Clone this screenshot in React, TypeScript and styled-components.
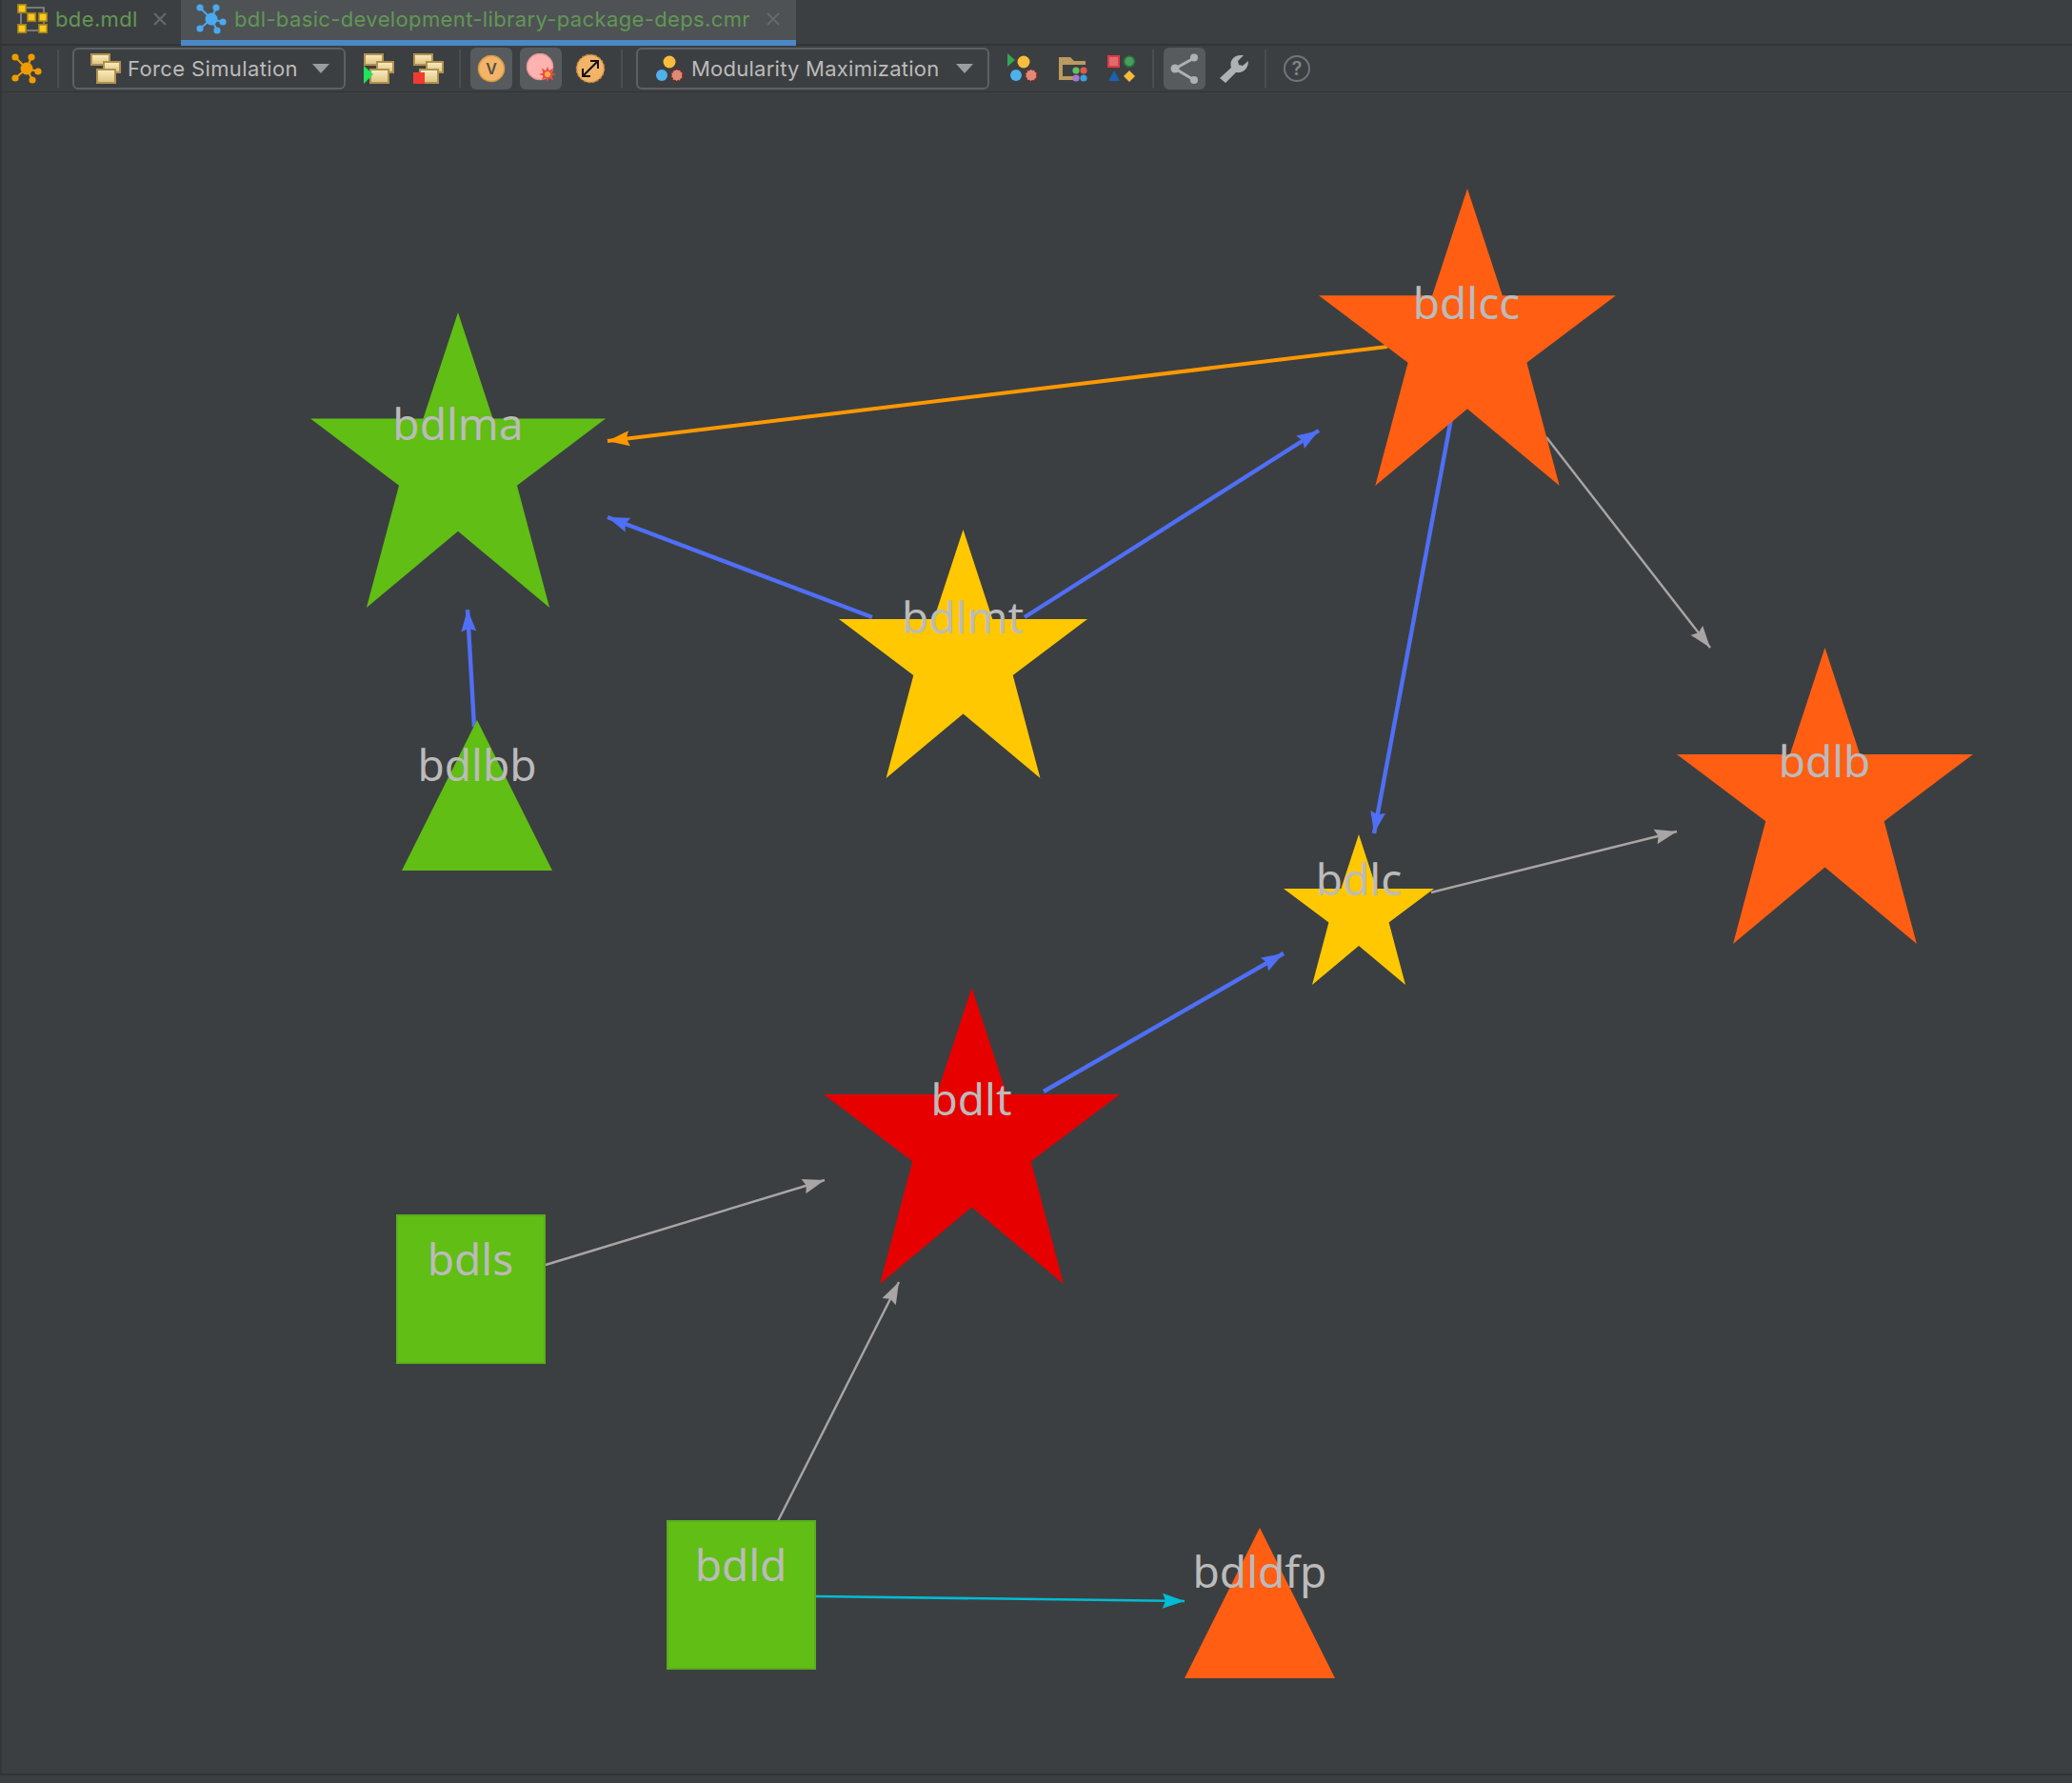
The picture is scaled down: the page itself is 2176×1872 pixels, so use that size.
import { FC } from 'react'
import styled, { createGlobalStyle } from 'styled-components'

const GlobalStyle = createGlobalStyle`
	html, body {
		margin: 0;
		padding: 0;
		background: #3c3f41;
	}
`

const UI_FONT = `Inter, 'Liberation Sans', sans-serif`

const Page = styled.div`
	width: 2176px;
	height: 1872px;
	display: flex;
	flex-direction: column;
	background: #3c3f41;
	font-family: ${UI_FONT};
	overflow: hidden;
`

const TabBar = styled.div`
	height: 48px;
	flex: none;
	display: flex;
	box-sizing: border-box;
	border-left: 2px solid #333536;
	border-bottom: 2px solid #323334;
`

const Tab = styled.div<{ $active?: boolean; $width: number; $pad: number }>`
	width: ${p => p.$width}px;
	height: 48px;
	flex: none;
	display: flex;
	align-items: flex-start;
	box-sizing: border-box;
	padding: 4px 0 0 ${p => p.$pad}px;
	background: ${p => (p.$active ? '#4e5254' : 'transparent')};
	border-bottom: ${p => (p.$active ? '6px solid #4a88c7' : '0')};
`

const TabTitle = styled.span`
	margin: 1px 0 0 8px;
	height: 30px;
	line-height: 30px;
	font-size: 22px;
	letter-spacing: 0.37px;
	color: #629755;
	white-space: nowrap;
	flex: 1;
`

const TabClose = styled.svg<{ $right: number }>`
	width: 14px;
	height: 14px;
	margin: 9px ${p => p.$right}px 0 0;
	flex: none;
	stroke: #67696b;
	stroke-width: 2;
`

const Toolbar = styled.div`
	height: 49px;
	flex: none;
	display: flex;
	align-items: flex-start;
	box-sizing: border-box;
	padding: 2px 0 0 4px;
	border-left: 2px solid #333536;
	border-bottom: 1px solid #323334;
`

const Group = styled.div`
	display: flex;
	gap: 8px;
	flex: none;
`

const Slot = styled.div<{ $on?: boolean }>`
	width: 44px;
	height: 44px;
	flex: none;
	display: flex;
	align-items: center;
	justify-content: center;
	border-radius: 6px;
	background: ${p => (p.$on ? '#575b5e' : 'transparent')};
`

const Separator = styled.div`
	width: 2px;
	height: 40px;
	margin: 2px 10px 0 10px;
	flex: none;
	background: #4b4e50;
`

const Combo = styled.div<{ $width: number }>`
	width: ${p => p.$width}px;
	height: 44px;
	flex: none;
	margin: 0 13px 0 4px;
	display: flex;
	align-items: center;
	box-sizing: border-box;
	padding: 0 15px 0 17px;
	border: 2px solid #5e6163;
	border-radius: 6px;
	gap: 7px;
`

const ComboText = styled.span<{ $spacing: number }>`
	flex: 1;
	font-size: 22px;
	letter-spacing: ${p => p.$spacing}px;
	color: #bbbbbb;
	white-space: nowrap;
`

const ComboArrow = styled.i`
	width: 0;
	height: 0;
	flex: none;
	border-left: 9px solid transparent;
	border-right: 9px solid transparent;
	border-top: 10px solid #9a9c9e;
`

const Canvas = styled.div`
	height: 1767px;
	flex: none;
	box-sizing: border-box;
	border-left: 2px solid #333536;
	border-bottom: 2px solid #323334;
`

const Graph = styled.svg`
	display: block;
	width: 2174px;
	height: 1765px;
`

const NodeLabel = styled.text`
	font-family: 'Noto Sans', 'Open Sans', sans-serif;
	font-size: 46px;
	fill: #bbbbbb;
	text-anchor: middle;
`

const IconLetter = styled.text<{ $size: number; $color: string }>`
	font-family: ${UI_FONT};
	font-size: ${p => p.$size}px;
	font-weight: 600;
	fill: ${p => p.$color};
	text-anchor: middle;
`

const Icon = styled.svg`
	width: 32px;
	height: 32px;
	flex: none;
	display: block;
`

const CloseX: FC<{ right: number }> = ({ right }) => (
	<TabClose viewBox="0 0 14 14" $right={right}>
		<path d="M1 1 L13 13 M13 1 L1 13" />
	</TabClose>
)

const forceDots = [
	[4, 4],
	[21, 4],
	[28, 19],
	[22, 28],
	[4, 26],
]

const ForceShape: FC<{ color: string }> = ({ color }) => (
	<g fill={color} stroke={color}>
		{forceDots.map(([x, y]) => (
			<g key={x + y}>
				<line x1={16} y1={16} x2={x} y2={y} strokeWidth={2} />
				<circle cx={x} cy={y} r={3.6} stroke="none" />
			</g>
		))}
		<circle cx={16} cy={16} r={6.5} stroke="none" />
	</g>
)

const ModelIcon: FC = () => (
	<Icon viewBox="0 0 32 32">
		<path d="M4 4 H28 V28 H4 Z" fill="none" stroke="#8c8e90" strokeWidth={1.6} />
		{[
			[0, 0],
			[10, 9],
			[22, 9],
			[0, 21],
			[22, 21],
		].map(([x, y]) => (
			<rect key={`${x}-${y}`} x={x + 0.8} y={y + 0.8} width={8.5} height={8.5} fill="#f7c81e" stroke="#9c7c18" strokeWidth={1.6} />
		))}
	</Icon>
)

const Stack: FC = () => (
	<>
		<defs>
			<linearGradient id="stackFill" x1="0" y1="0" x2="0" y2="1">
				<stop offset="0" stopColor="#fbeec4" />
				<stop offset="1" stopColor="#dcc27c" />
			</linearGradient>
		</defs>
		{[
			[1, 1, 19, 11],
			[14, 9, 17, 11],
			[7, 17, 19, 14],
		].map(([x, y, w, h]) => (
			<rect key={x} x={x} y={y} width={w} height={h} fill="url(#stackFill)" stroke="#b09050" strokeWidth={2} />
		))}
	</>
)

const ClusterDots: FC<{ x?: number }> = ({ x = 0 }) => (
	<>
		<circle cx={15 + x} cy={9} r={6.5} fill="#f8bd3c" />
		<circle cx={7 + x} cy={23} r={6} fill="#4fb0ec" />
		<circle cx={23 + x} cy={23} r={6} fill="#dd8b76" stroke="#8f2420" strokeWidth={1.6} strokeDasharray="2 1.5" />
	</>
)

const burst =
	'23,14 24.8,18.2 29,15.6 27.6,20.4 32,22 27.6,23.6 29,28.4 24.8,25.8 23,30 21.2,25.8 17,28.4 18.4,23.6 14,22 18.4,20.4 17,15.6 21.2,18.2'

type Shape = 'star' | 'triangle' | 'square'

interface GraphNode {
	id: string
	shape: Shape
	x: number
	y: number
	size: number
	color: string
	labelX: number
	labelY: number
}

const GREEN = '#60be15'
const ORANGE = '#ff5e13'
const YELLOW = '#ffc800'
const RED = '#e60000'
const BLUE = '#4f6ff6'
const GREY = '#aaa5a5'

const nodes: GraphNode[] = [
	{ id: 'bdlcc', shape: 'star', x: 1385, y: 198, size: 312, color: ORANGE, labelX: 1540, labelY: 335 },
	{ id: 'bdlma', shape: 'star', x: 326, y: 328, size: 310, color: GREEN, labelX: 481, labelY: 462 },
	{ id: 'bdlmt', shape: 'star', x: 881, y: 556, size: 261, color: YELLOW, labelX: 1011, labelY: 665 },
	{ id: 'bdlb', shape: 'star', x: 1761, y: 680, size: 311, color: ORANGE, labelX: 1916, labelY: 816 },
	{ id: 'bdlc', shape: 'star', x: 1348, y: 876, size: 158, color: YELLOW, labelX: 1427, labelY: 940 },
	{ id: 'bdlt', shape: 'star', x: 865, y: 1037, size: 311, color: RED, labelX: 1020, labelY: 1171 },
	{ id: 'bdlbb', shape: 'triangle', x: 422, y: 756, size: 158, color: GREEN, labelX: 501, labelY: 820 },
	{ id: 'bdldfp', shape: 'triangle', x: 1244, y: 1604, size: 158, color: ORANGE, labelX: 1323, labelY: 1667 },
	{ id: 'bdls', shape: 'square', x: 417, y: 1276, size: 155, color: GREEN, labelX: 494, labelY: 1339 },
	{ id: 'bdld', shape: 'square', x: 701, y: 1597, size: 155, color: GREEN, labelX: 778, labelY: 1660 },
]

const edges = [
	{ from: [1457, 364], to: [638, 463], color: '#ff9800', width: 4 },
	{ from: [916, 648], to: [638, 543], color: BLUE, width: 4.4 },
	{ from: [1076, 648], to: [1385, 452], color: BLUE, width: 4.4 },
	{ from: [498, 763], to: [491, 640], color: BLUE, width: 4.4 },
	{ from: [1525, 434], to: [1443, 875], color: BLUE, width: 4.4 },
	{ from: [1096, 1146], to: [1348, 1001], color: BLUE, width: 4.4 },
	{ from: [1624, 459], to: [1796, 680], color: GREY, width: 2.4 },
	{ from: [1503, 937], to: [1761, 873], color: GREY, width: 2.4 },
	{ from: [573, 1328], to: [866, 1239], color: GREY, width: 2.4 },
	{ from: [817, 1597], to: [944, 1346], color: GREY, width: 2.4 },
	{ from: [857, 1676], to: [1244, 1681], color: '#00bcd4', width: 2.6 },
]

const starShape = [
	[0.5, 0],
	[0.618, 0.36],
	[1, 0.36],
	[0.7, 0.586],
	[0.81, 1],
	[0.5, 0.741],
	[0.19, 1],
	[0.3, 0.586],
	[0, 0.36],
	[0.382, 0.36],
]

const triangleShape = [
	[0.5, 0],
	[1, 1],
	[0, 1],
]

const squareShape = [
	[0, 0],
	[1, 0],
	[1, 1],
	[0, 1],
]

const shapes: Record<Shape, number[][]> = { star: starShape, triangle: triangleShape, square: squareShape }

const nodePoints = ({ shape, x, y, size }: GraphNode) =>
	shapes[shape].map(([px, py]) => `${x + px * size},${y + py * size}`).join(' ')

// arrow head is drawn by hand so that the tip lands exactly on the edge end
const headPoints = (from: number[], to: number[]) => {
	const len = Math.hypot(to[0] - from[0], to[1] - from[1])
	const ux = (to[0] - from[0]) / len
	const uy = (to[1] - from[1]) / len
	const at = (back: number, side: number) => `${to[0] - ux * back - uy * side},${to[1] - uy * back + ux * side}`
	return [at(0, 0), at(23, 8), at(20, 0), at(23, -8)].join(' ')
}

const App: FC = () => (
	<Page>
		<GlobalStyle />
		<TabBar>
			<Tab $width={188} $pad={16}>
				<ModelIcon />
				<TabTitle>bde.mdl</TabTitle>
				<CloseX right={15} />
			</Tab>
			<Tab $active $width={646} $pad={16}>
				<Icon viewBox="0 0 32 32">
					<ForceShape color="#4aa8f0" />
				</Icon>
				<TabTitle>bdl-basic-development-library-package-deps.cmr</TabTitle>
				<CloseX right={17} />
			</Tab>
		</TabBar>

		<Toolbar>
			<Slot>
				<Icon viewBox="0 0 32 32">
					<ForceShape color="#f09c00" />
				</Icon>
			</Slot>
			<Separator />
			<Combo $width={287}>
				<Icon viewBox="0 0 32 32">
					<Stack />
				</Icon>
				<ComboText $spacing={0.37}>Force Simulation</ComboText>
				<ComboArrow />
			</Combo>
			<Group>
				<Slot>
					<Icon viewBox="0 0 32 32">
						<Stack />
						<polygon points="0,13 10,22 0,32" fill="#1de45a" />
					</Icon>
				</Slot>
				<Slot>
					<Icon viewBox="0 0 32 32">
						<Stack />
						<rect x="0" y="20" width="12" height="12" fill="#f23a30" />
					</Icon>
				</Slot>
			</Group>
			<Separator />
			<Group>
				<Slot $on>
					<Icon viewBox="0 0 32 32">
						<circle cx="16" cy="16" r="13.5" fill="#f2b469" stroke="#d99a45" strokeWidth={1.5} />
						<IconLetter x="16" y="22" $size={16} $color="#54504a">
							V
						</IconLetter>
					</Icon>
				</Slot>
				<Slot $on>
					<Icon viewBox="0 0 32 32">
						<circle cx="15" cy="14" r="13.5" fill="#ffb3b0" stroke="#e89a94" strokeWidth={1.5} />
						<polygon points={burst} fill="#ee4b3e" />
						<circle cx="23" cy="22" r="3" fill="#f6b04a" />
					</Icon>
				</Slot>
				<Slot>
					<Icon viewBox="0 0 32 32">
						<circle cx="16" cy="16" r="14.5" fill="#f2b469" stroke="#c98a3c" strokeWidth={1.5} strokeDasharray="3 1.5" />
						<path d="M9 23 L23 9 M16 8 H24 V16 M8 16 V24 H16" fill="none" stroke="#111" strokeWidth={2} />
					</Icon>
				</Slot>
			</Group>
			<Separator />
			<Combo $width={371}>
				<Icon viewBox="0 0 32 32">
					<ClusterDots x={1} />
				</Icon>
				<ComboText $spacing={0.25}>Modularity Maximization</ComboText>
				<ComboArrow />
			</Combo>
			<Group>
				<Slot>
					<Icon viewBox="0 0 32 32">
						<ClusterDots x={2} />
						<polygon points="0,0 8,7 0,14" fill="#2fa84f" />
					</Icon>
				</Slot>
				<Slot>
					<Icon viewBox="0 0 32 32">
						<path d="M2 4 H14 L18 8 H30 V12 H6 V24 H18 V28 H2 Z" fill="#b99a60" />
						<circle cx="20" cy="18" r="3.6" fill="#62c162" />
						<circle cx="28" cy="18" r="3.6" fill="#e0594f" />
						<circle cx="20" cy="26" r="3.6" fill="#a878c8" />
						<circle cx="28" cy="26" r="3.6" fill="#3ba0dc" />
					</Icon>
				</Slot>
				<Slot>
					<Icon viewBox="0 0 32 32">
						<rect x="2" y="3" width="11" height="11" fill="#e06a70" stroke="#e03a40" strokeWidth={2} />
						<circle cx="24" cy="8.5" r="5.5" fill="#4f9a5c" stroke="#1e7a38" strokeWidth={1.6} />
						<polygon points="8,18 14,29 2,29" fill="#1d5fb0" />
						<polygon points="24,18 30,24 24,30 18,24" fill="#f5b93c" />
					</Icon>
				</Slot>
			</Group>
			<Separator />
			<Group>
				<Slot $on>
					<Icon viewBox="0 0 32 32">
						<path d="M26 5 L6 16 L26 28" fill="none" stroke="#afb1b3" strokeWidth={3} />
						<circle cx="6" cy="16" r="4.5" fill="#afb1b3" />
						<circle cx="26" cy="4.5" r="4" fill="#afb1b3" />
						<circle cx="26" cy="28" r="4" fill="#afb1b3" />
					</Icon>
				</Slot>
				<Slot>
					<Icon viewBox="0 0 32 32">
						<path
							d="M1 26 L13 15 C11 9 14 3 22 2 L26 2 L20 8 L21 12 L25 13 L31 8 C31 16 26 21 18 20 L7 31 Z"
							fill="#afb1b3"
						/>
					</Icon>
				</Slot>
			</Group>
			<Separator />
			<Slot>
				<Icon viewBox="0 0 32 32">
					<circle cx="16" cy="16" r="13" fill="none" stroke="#6e7679" strokeWidth={2} />
					<IconLetter x="16" y="23" $size={20} $color="#7f8789">
						?
					</IconLetter>
				</Icon>
			</Slot>
		</Toolbar>

		<Canvas>
			<Graph viewBox="2 97 2174 1765">
				{edges.map(edge => (
					<g key={`${edge.to[0]}-${edge.to[1]}`}>
						<line
							x1={edge.from[0]}
							y1={edge.from[1]}
							x2={edge.to[0]}
							y2={edge.to[1]}
							stroke={edge.color}
							strokeWidth={edge.width}
						/>
						<polygon points={headPoints(edge.from, edge.to)} fill={edge.color} />
					</g>
				))}
				{nodes.map(node => (
					<polygon
						key={node.id}
						points={nodePoints(node)}
						fill={node.color}
						stroke={node.shape === 'square' ? '#5aac1c' : 'none'}
						strokeWidth={2}
					/>
				))}
				{nodes.map(node => (
					<NodeLabel key={node.id} x={node.labelX} y={node.labelY}>
						{node.id}
					</NodeLabel>
				))}
			</Graph>
		</Canvas>
	</Page>
)

export default App
